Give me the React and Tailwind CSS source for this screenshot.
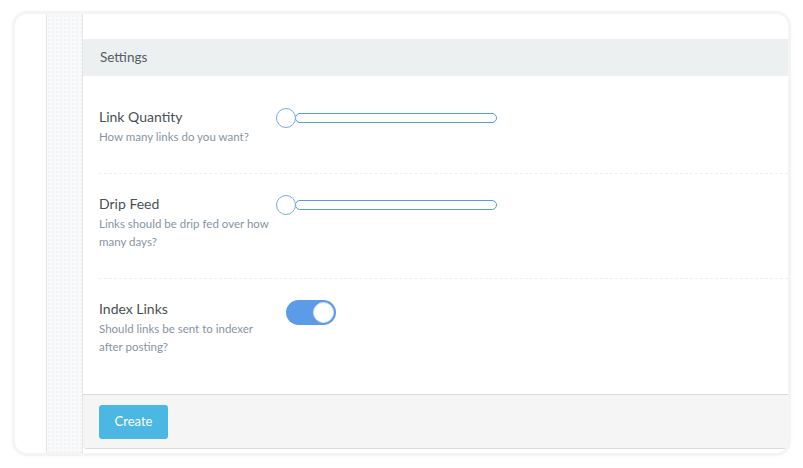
import React from 'react';

const font = { fontFamily: '"Source Sans Pro", Lato, "Noto Sans", sans-serif' };

function Slider() {
  return (
    <div className="flex items-center">
      <div className="w-5 h-5 rounded-full border border-[#7aa9e6] bg-white z-10" />
      <div className="w-[202px] h-[10px] -ml-px rounded-full border border-[#5a99e6] bg-white" />
    </div>
  );
}

function Toggle() {
  return (
    <div className="ml-[10px] w-[50px] h-[25px] rounded-full bg-[#5b9be8] flex items-center justify-end px-[2px]">
      <div className="w-[21px] h-[21px] rounded-full bg-white border border-[#d6e4f5]" />
    </div>
  );
}

function Row({ label, desc, children, last }) {
  return (
    <div className={`flex pt-5 pb-[27px] ${last ? '' : 'border-b border-dashed border-[#eceef0]'}`}>
      <div className="w-[177px] shrink-0 pr-px">
        <div className="text-[14px] leading-5 text-[#4a5056]">{label}</div>
        <div className="mt-px text-[11.5px] leading-[18px] text-[#8794a2]">{desc}</div>
      </div>
      <div className="pt-[1px]">{children}</div>
    </div>
  );
}

export default function App() {
  return (
    <div className="min-h-screen bg-white pt-[14px] pl-[15px]" style={font}>
      <div className="w-[773px] h-[439px] rounded-[12px] bg-white overflow-hidden flex shadow-[0_0_0_3px_#f4f4f4,0_1px_8px_rgba(0,0,0,0.05)]">
        <div className="w-[32px] shrink-0 border-r border-[#e3e6e9]" />
        <div className="w-[36px] shrink-0 border-r border-[#e3e6e9] bg-[#f9fafb] bg-[radial-gradient(#f2f3f5_1px,transparent_1px)] bg-[size:4px_4px]" />
        <div className="flex-1 pt-[25px] pb-[4px] flex flex-col">
          <div className="flex-1 flex flex-col border-b border-[#d5dde3] rounded-bl-[4px] rounded-br-[4px] overflow-hidden">
            <div className="h-[37px] bg-[#edf0f1] flex items-center pl-[17px] text-[13.5px] text-[#555d66]">
              Settings
            </div>
            <div className="flex-1 bg-white pl-[16px] pt-[11px]">
              <Row label="Link Quantity" desc="How many links do you want?">
                <Slider />
              </Row>
              <Row label="Drip Feed" desc="Links should be drip fed over how many days?">
                <Slider />
              </Row>
              <Row label="Index Links" desc="Should links be sent to indexer after posting?" last>
                <Toggle />
              </Row>
            </div>
            <div className="h-[54px] bg-[#f5f5f5] border-t border-[#d5dde3] flex items-center pl-[16px]">
              <button className="w-[69px] h-[34px] rounded-[3px] bg-[#4ab8e2] text-white text-[13px]">
                Create
              </button>
            </div>
          </div>
        </div>
      </div>
    </div>
  );
}
